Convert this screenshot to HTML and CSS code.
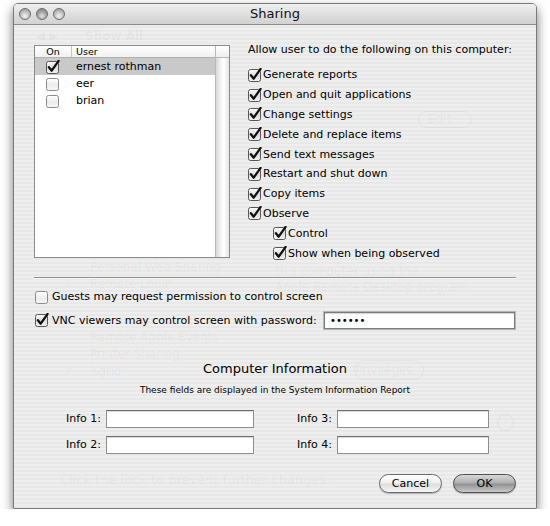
FILE: index.html
```html
<!DOCTYPE html>
<html>
<head>
<meta charset="utf-8">
<title>Sharing</title>
<link rel="stylesheet" href="styles.css">
</head>
<body>
<svg class="defs" width="0" height="0" aria-hidden="true">
  <defs>
    <linearGradient id="cbOn" x1="0" y1="0" x2="0" y2="1">
      <stop offset="0" stop-color="#fdfdfd"/>
      <stop offset="0.5" stop-color="#dedede"/>
      <stop offset="1" stop-color="#f2f2f2"/>
    </linearGradient>
    <linearGradient id="cbOff" x1="0" y1="0" x2="0" y2="1">
      <stop offset="0" stop-color="#ffffff"/>
      <stop offset="0.55" stop-color="#ececec"/>
      <stop offset="1" stop-color="#f8f8f8"/>
    </linearGradient>
    <symbol id="cb-on" viewBox="0 0 14 14">
      <rect x="0.5" y="1.5" width="12" height="12" rx="2" fill="url(#cbOn)" stroke="#555"/>
      <path d="M2.9 7.2 L5.7 10.7 L12.6 0.9" fill="none" stroke="#111" stroke-width="2.3" stroke-linecap="round" stroke-linejoin="round"/>
    </symbol>
    <symbol id="cb-off" viewBox="0 0 14 14">
      <rect x="0.5" y="1.5" width="12" height="12" rx="2" fill="url(#cbOff)" stroke="#8c8c8c"/>
    </symbol>
  </defs>
</svg>

<div class="page">
  <div class="window">
    <div class="titlebar">
      <div class="lights">
        <span class="light"></span>
        <span class="light mid"></span>
        <span class="light"></span>
      </div>
      <div class="title">Sharing</div>
      <div></div>
    </div>

    <div class="body">
      <div class="ghosts" aria-hidden="true">
        <span class="g g-nav">◀ ▶</span>
        <span class="g g-showall">Show All</span>
        <span class="g g-edit">Edit...</span>
        <span class="g g-pws">Personal Web Sharing</span>
        <span class="g g-rl-c">✓</span>
        <span class="g g-rl">Remote Login</span>
        <span class="g g-this">this computer using the</span>
        <span class="g g-ard">Apple Remote Desktop program</span>
        <span class="g g-rae">Remote Apple Events</span>
        <span class="g g-ps">Printer Sharing</span>
        <span class="g g-xg-c">✓</span>
        <span class="g g-xg">Xgrid</span>
        <span class="g g-priv">Privileges...</span>
        <span class="g g-help">?</span>
        <span class="g g-lock">Click the lock to prevent further changes.</span>
      </div>

      <div class="toprow">
        <div class="listbox">
          <div class="list-main">
            <div class="list-header">
              <div class="col-on">On</div>
              <div class="col-user">User</div>
            </div>
            <div class="row selected">
              <div class="col-on"><svg class="cb" width="14" height="14"><use href="#cb-on"/></svg></div>
              <div class="col-user">ernest rothman</div>
            </div>
            <div class="row">
              <div class="col-on"><svg class="cb" width="14" height="14"><use href="#cb-off"/></svg></div>
              <div class="col-user">eer</div>
            </div>
            <div class="row">
              <div class="col-on"><svg class="cb" width="14" height="14"><use href="#cb-off"/></svg></div>
              <div class="col-user">brian</div>
            </div>
          </div>
          <div class="scrollbar">
            <div class="sb-head"></div>
            <div class="sb-track"></div>
          </div>
        </div>

        <div class="perms">
          <div class="perm-heading">Allow user to do the following on this computer:</div>
          <ul class="perm-list">
            <li class="perm"><svg class="cb" width="14" height="14"><use href="#cb-on"/></svg>Generate reports</li>
            <li class="perm"><svg class="cb" width="14" height="14"><use href="#cb-on"/></svg>Open and quit applications</li>
            <li class="perm"><svg class="cb" width="14" height="14"><use href="#cb-on"/></svg>Change settings</li>
            <li class="perm"><svg class="cb" width="14" height="14"><use href="#cb-on"/></svg>Delete and replace items</li>
            <li class="perm"><svg class="cb" width="14" height="14"><use href="#cb-on"/></svg>Send text messages</li>
            <li class="perm"><svg class="cb" width="14" height="14"><use href="#cb-on"/></svg>Restart and shut down</li>
            <li class="perm"><svg class="cb" width="14" height="14"><use href="#cb-on"/></svg>Copy items</li>
            <li class="perm"><svg class="cb" width="14" height="14"><use href="#cb-on"/></svg>Observe</li>
            <li class="perm sub"><svg class="cb" width="14" height="14"><use href="#cb-on"/></svg>Control</li>
            <li class="perm sub"><svg class="cb" width="14" height="14"><use href="#cb-on"/></svg>Show when being observed</li>
          </ul>
        </div>
      </div>

      <div class="separator"></div>

      <div class="option guests">
        <svg class="cb" width="14" height="14"><use href="#cb-off"/></svg>
        <span>Guests may request permission to control screen</span>
      </div>
      <div class="option vnc">
        <svg class="cb" width="14" height="14"><use href="#cb-on"/></svg>
        <span>VNC viewers may control screen with password:</span>
        <div class="password">••••••</div>
      </div>

      <div class="info-title">Computer Information</div>
      <div class="info-sub">These fields are displayed in the System Information Report</div>

      <div class="info-grid">
        <label class="info-label">Info 1:</label>
        <div class="field"></div>
        <label class="info-label">Info 3:</label>
        <div class="field"></div>
        <label class="info-label">Info 2:</label>
        <div class="field"></div>
        <label class="info-label">Info 4:</label>
        <div class="field"></div>
      </div>

      <div class="buttons">
        <button class="btn">Cancel</button>
        <button class="btn default">OK</button>
      </div>
    </div>
  </div>
</div>
</body>
</html>
```

FILE: styles.css
```css
* {
  box-sizing: border-box;
  margin: 0;
  padding: 0;
}

body {
  margin: 0;
  background: #ffffff;
  font-family: "DejaVu Sans", "Liberation Sans", sans-serif;
  font-size: 11px;
  color: #000;
}

.defs {
  position: absolute;
  width: 0;
  height: 0;
  overflow: hidden;
}

.page {
  padding: 3px 0 0 13px;
}

.window {
  width: 524px;
  height: 506px;
  border: 1px solid #7a7a7a;
  border-radius: 5px 5px 1px 1px;
  box-shadow: 0 5px 11px rgba(0, 0, 0, 0.55);
  background: repeating-linear-gradient(to bottom, #eeeeee 0, #eeeeee 2px, #e8e8e8 2px, #e8e8e8 4px);
  display: flex;
  flex-direction: column;
  isolation: isolate;
  overflow: hidden;
}

/* Title bar */
.titlebar {
  height: 21px;
  flex: none;
  display: grid;
  grid-template-columns: 1fr auto 1fr;
  align-items: center;
  border-bottom: 1px solid #8a8a8a;
  background: linear-gradient(to bottom, #f0f0f0, #dcdcdc 60%, #d2d2d2);
}

.lights {
  display: flex;
  gap: 5px;
  padding-left: 5px;
}

.light {
  width: 12px;
  height: 12px;
  border-radius: 50%;
  border: 1px solid #6d6d6d;
  background: radial-gradient(circle at 50% 70%, #f4f4f4 0, #c6c6c6 45%, #8f8f8f 100%);
}

.light.mid {
  background: radial-gradient(circle at 50% 70%, #e2e2e2 0, #a9a9a9 45%, #7a7a7a 100%);
}

.title {
  font-size: 13px;
  line-height: 20px;
  color: #111;
}

/* Sheet body */
.body {
  flex: 1;
  padding: 17px 20px 0 20px;
}

/* Ghosted background window, seen faintly through the sheet */
.ghosts {
  position: absolute;
  top: 26px;
  left: 14px;
  width: 522px;
  height: 480px;
  z-index: -1;
  color: rgba(0, 0, 0, 0.045);
  font-size: 12px;
  pointer-events: none;
}

.g {
  position: absolute;
  white-space: nowrap;
}

.g-nav { left: 22px; top: 3px; }
.g-showall { left: 71px; top: 3px; font-weight: bold; }
.g-edit { left: 404px; top: 85px; width: 54px; height: 17px; border: 1px solid rgba(0,0,0,0.04); border-radius: 9px; text-align: center; line-height: 15px; }
.g-pws { left: 76px; top: 234px; }
.g-rl-c { left: 50px; top: 251px; }
.g-rl { left: 76px; top: 251px; }
.g-this { left: 261px; top: 238px; }
.g-ard { left: 261px; top: 254px; }
.g-rae { left: 76px; top: 304px; }
.g-ps { left: 76px; top: 321px; }
.g-xg-c { left: 50px; top: 338px; }
.g-xg { left: 76px; top: 338px; }
.g-priv { left: 340px; top: 334px; width: 70px; height: 20px; border: 1px solid rgba(0,0,0,0.04); border-radius: 10px; text-align: center; line-height: 18px; }
.g-help { left: 483px; top: 388px; width: 17px; height: 17px; border: 1px solid rgba(0,0,0,0.05); border-radius: 50%; text-align: center; line-height: 15px; }
.g-lock { left: 46px; top: 446px; font-size: 13px; }

/* Top area */
.toprow {
  display: flex;
  align-items: flex-start;
}

.listbox {
  margin-top: 3px;
  width: 196px;
  height: 213px;
  border: 1px solid #8a8a8a;
  background: #ffffff;
  display: flex;
}

.list-main {
  flex: 1;
}

.list-header {
  height: 12px;
  display: flex;
  border-bottom: 1px solid #b0b0b0;
  font-size: 9.5px;
  line-height: 11px;
  background: linear-gradient(to bottom, #ffffff, #f1f1f1);
}

.list-header .col-on {
  border-right: 1px solid #c4c4c4;
}

.col-on {
  width: 37px;
  flex: none;
  display: flex;
  justify-content: center;
  align-items: center;
}

.col-user {
  padding-left: 4px;
}

.row {
  height: 17px;
  display: flex;
  align-items: center;
}

.row.selected {
  background: #c9c9c9;
}

.scrollbar {
  width: 14px;
  flex: none;
  border-left: 1px solid #b8b8b8;
  display: flex;
  flex-direction: column;
}

.sb-head {
  height: 12px;
  border-bottom: 1px solid #b8b8b8;
  background: linear-gradient(to bottom, #ffffff, #eeeeee);
}

.sb-track {
  flex: 1;
  background: linear-gradient(to right, #d6d6d6, #f3f3f3 35%, #ffffff 60%, #e4e4e4);
}

.perms {
  flex: 1;
  margin-left: 18px;
}

.perm-heading {
  height: 16px;
  line-height: 16px;
  margin-bottom: 7px;
}

.perm-list {
  list-style: none;
}

.perm {
  height: 19.8px;
  display: flex;
  align-items: center;
}

.perm.sub {
  padding-left: 25px;
}

.cb {
  flex: none;
  margin-right: 1px;
}

.separator {
  margin-top: 14px;
  height: 2px;
  border-top: 1px solid #8e8e8e;
  border-bottom: 1px solid #fafafa;
}

.option {
  display: flex;
  align-items: center;
  padding-left: 1px;
}

.option .cb {
  margin-right: 3px;
}

.guests {
  margin-top: 8px;
  height: 20px;
}

.vnc {
  margin-top: 3px;
  height: 21px;
}

.password {
  margin-left: auto;
  width: 191px;
  height: 17px;
  margin-right: 1px;
  border: 1px solid #7c7c7c;
  box-shadow: 0 0 0 1px #b5b5b5, inset 0 1px 1px rgba(0, 0, 0, 0.18);
  background: #ffffff;
  padding-left: 5px;
  font-size: 10px;
  line-height: 15px;
}

.info-title {
  margin-top: 29px;
  text-align: center;
  font-size: 13px;
  line-height: 18px;
}

.info-sub {
  margin-top: 5px;
  text-align: center;
  font-size: 9px;
  line-height: 14px;
}

.info-grid {
  margin-top: 13px;
  display: grid;
  grid-template-columns: 72px 148px 83px 152px;
  grid-auto-rows: 18px;
  row-gap: 8px;
  align-items: center;
}

.info-label {
  text-align: right;
  padding-right: 5px;
}

.field {
  height: 18px;
  background: #ffffff;
  border: 1px solid #8e8e8e;
  border-top-color: #6c6c6c;
  box-shadow: inset 0 1px 1px rgba(0, 0, 0, 0.15);
}

.buttons {
  margin-top: 20px;
  display: flex;
  justify-content: flex-end;
  gap: 11px;
}

.btn {
  width: 63px;
  height: 19px;
  border-radius: 10px;
  border: 1px solid #6a6a6a;
  font-family: "DejaVu Sans", "Liberation Sans", sans-serif;
  font-size: 11px;
  color: #000;
  background: linear-gradient(to bottom, #ffffff 0, #f0f0f0 45%, #dedede 55%, #f6f6f6 100%);
  box-shadow: 0 1px 1px rgba(0, 0, 0, 0.25);
}

.btn.default {
  border-color: #4f4f4f;
  background: linear-gradient(to bottom, #d8d8d8 0, #b0b0b0 45%, #939393 55%, #c9c9c9 100%);
}
```
